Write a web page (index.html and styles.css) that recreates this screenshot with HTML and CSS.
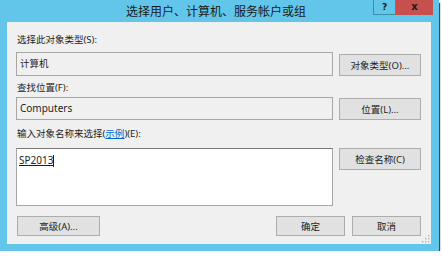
FILE: index.html
```html
<!DOCTYPE html>
<html lang="zh-CN">
<head>
<meta charset="utf-8">
<title>选择用户、计算机、服务帐户或组</title>
<link rel="stylesheet" href="styles.css">
</head>
<body>
<div class="window">
  <div class="titlebar">
    <div class="title">选择用户、计算机、服务帐户或组</div>
    <div class="caption-btns">
      <div class="cb help">?</div>
      <div class="cb close">x</div>
    </div>
  </div>
  <div class="content">
    <div class="label l1">选择此对象类型(S):</div>
    <div class="row r1">
      <div class="field">计算机</div>
      <div class="btn">对象类型(O)...</div>
    </div>
    <div class="label l2">查找位置(F):</div>
    <div class="row r2">
      <div class="field latin">Computers</div>
      <div class="btn">位置(L)...</div>
    </div>
    <div class="label l3">输入对象名称来选择(<a class="link">示例</a>)(E):</div>
    <div class="row r3">
      <div class="textarea"><span class="entry">SP2013</span><span class="caret"></span></div>
      <div class="btn">检查名称(C)</div>
    </div>
    <div class="footer">
      <div class="btn adv">高级(A)...</div>
      <div class="btn ok">确定</div>
      <div class="btn cancel">取消</div>
    </div>
    <svg class="grip" width="9" height="9" viewBox="0 0 9 9">
      <rect x="7" y="1" width="1.4" height="1.4" fill="#b5b5b5"/>
      <rect x="4" y="4" width="1.4" height="1.4" fill="#b5b5b5"/>
      <rect x="7" y="4" width="1.4" height="1.4" fill="#b5b5b5"/>
      <rect x="1" y="7" width="1.4" height="1.4" fill="#b5b5b5"/>
      <rect x="4" y="7" width="1.4" height="1.4" fill="#b5b5b5"/>
      <rect x="7" y="7" width="1.4" height="1.4" fill="#b5b5b5"/>
    </svg>
  </div>
</div>
</body>
</html>
```
FILE: styles.css
```css
html, body {
  margin: 0;
  padding: 0;
  background: #ffffff;
}
body {
  font-family: "Noto Sans", "Noto Sans CJK SC", sans-serif;
  font-size: 9.5px;
  color: #1e1e1e;
}
.window {
  width: 439px;
  height: 251px;
  box-sizing: border-box;
  background: #62c6ea;
  padding: 0 8px 7px 7px;
  display: flex;
  flex-direction: column;
  box-shadow: 1px 3px 1px rgba(40, 40, 40, 0.85);
}
.titlebar {
  height: 22px;
  position: relative;
  flex: none;
}
.title {
  text-align: center;
  font-size: 12px;
  line-height: 22px;
  padding-top: 1px;
  color: #1a1a1a;
  margin-left: -6px;
}
.caption-btns {
  position: absolute;
  top: 0;
  right: -2px;
  display: flex;
}
.cb {
  height: 15px;
  box-sizing: border-box;
  display: flex;
  align-items: center;
  justify-content: center;
  font-family: "DejaVu Sans", sans-serif;
  font-weight: bold;
  color: #1a1a1a;
}
.help {
  width: 23px;
  border: 1px solid #3b8eaa;
  border-top: none;
  font-size: 9px;
  background: #62c6ea;
}
.close {
  width: 37px;
  background: #c7504f;
  font-size: 10px;
  padding-bottom: 2px;
}
.content {
  flex: 1;
  background: #f0f0f0;
  padding: 10px 10px 8px 9px;
  display: flex;
  flex-direction: column;
  position: relative;
}
.label {
  line-height: 16px;
  margin-left: 1px;
  white-space: nowrap;
}
.l1 { margin-bottom: 4px; }
.l2 { margin-top: 4px; margin-bottom: 1px; }
.l3 { margin-top: 6px; margin-bottom: 6px; }
.link {
  color: #0066cc;
  text-decoration: underline;
}
.row {
  display: grid;
  grid-template-columns: 317px 82px;
  column-gap: 6px;
}
.r1 { height: 24px; align-items: end; }
.r2 { height: 23px; align-items: end; }
.r3 { height: 58px; align-items: start; }
.field {
  box-sizing: border-box;
  height: 100%;
  border: 1px solid #a6a6a6;
  background: #f0f0f0;
  padding: 3px 3px 0 3px;
  line-height: 15px;
}
.latin { font-size: 10px; }
.r1 .btn { height: 22px; }
.r2 .btn { height: 22px; }
.r3 .btn { height: 22px; }
.btn {
  box-sizing: border-box;
  background: #e1e1e1;
  border: 1px solid #adadad;
  display: flex;
  align-items: center;
  justify-content: center;
  white-space: nowrap;
}
.textarea {
  box-sizing: border-box;
  height: 58px;
  background: #ffffff;
  border: 1px solid #a6a6a6;
  border-top-color: #7a7a7a;
  padding: 4px 2px 0 2px;
  line-height: 14px;
  font-size: 10px;
  display: flex;
  align-items: flex-start;
}
.entry {
  text-decoration: underline;
  text-underline-offset: 1px;
}
.caret {
  width: 1px;
  height: 12px;
  margin-top: 2px;
  background: #1e1e1e;
}
.footer {
  margin-top: 10px;
  padding-left: 1px;
  display: flex;
  height: 20px;
}
.adv { width: 83px; }
.ok { width: 69px; margin-left: auto; }
.cancel { width: 69px; margin-left: 7px; }
.grip {
  position: absolute;
  right: 1px;
  bottom: 1px;
}
```
